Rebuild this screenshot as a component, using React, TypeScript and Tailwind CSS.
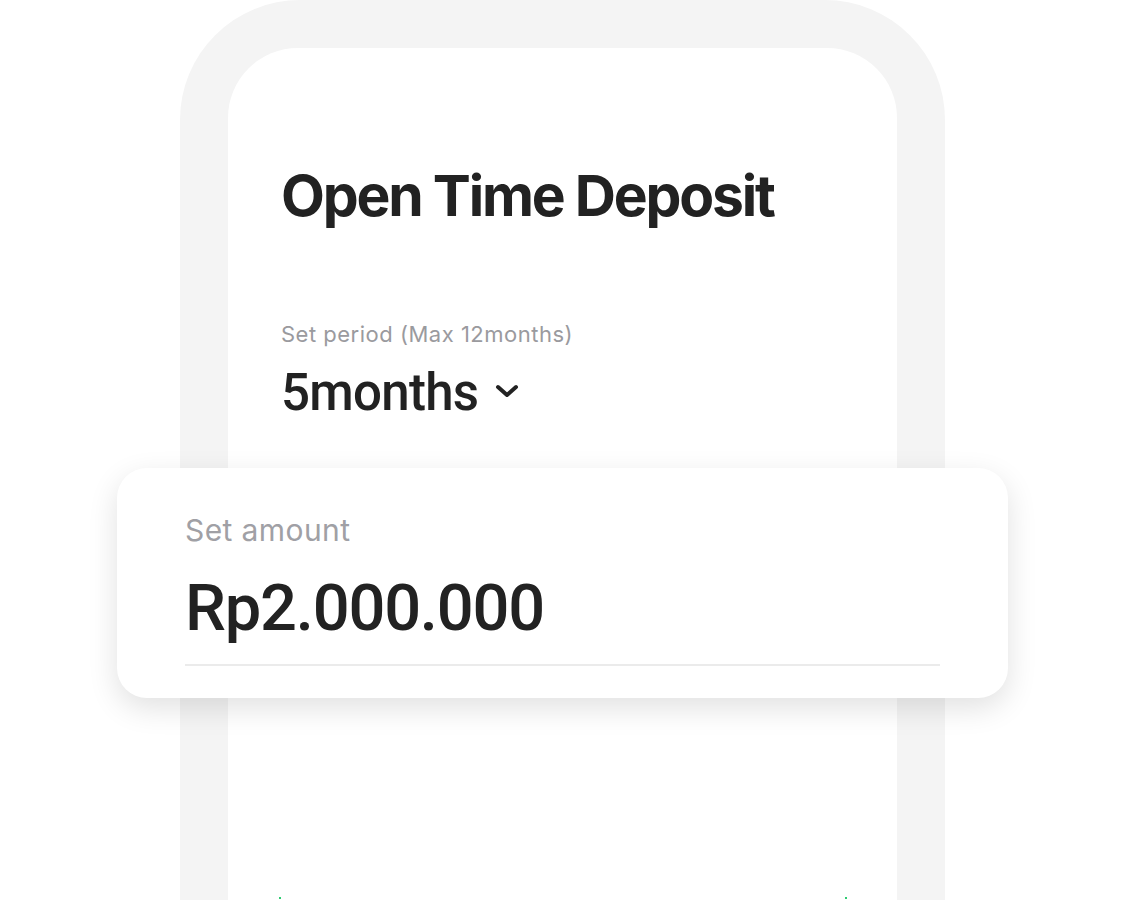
import React from 'react';

const App: React.FC = () => {
  return (
    <div className="relative w-[1125px] h-[900px] overflow-hidden bg-white" style={{ fontFamily: 'Inter, "Noto Sans", sans-serif' }}>
      {/* Phone frame */}
      <div className="ml-[180px] w-[765px] h-[948px] bg-[#f4f4f4] rounded-t-[120px] pt-[48px] px-[48px]">
        <div className="h-full bg-white rounded-t-[70px] pl-[53px] pt-[119px]">
          <h1 className="text-[57px] font-bold text-[#222] leading-none tracking-[-2.2px]">Open Time Deposit</h1>

          <p className="mt-[99px] text-[22px] text-[#9a9a9e] leading-none tracking-[0.5px]">Set period (Max 12months)</p>
          <div className="mt-[22px] flex items-center gap-[17px]">
            <span className="text-[51px] font-medium text-[#222] leading-none tracking-[-0.7px]" style={{ fontFamily: 'Roboto, sans-serif' }}>5months</span>
            <svg width="24" height="16" viewBox="0 0 24 16" className="mb-[4px]">
              <path d="M3 4 L12 12 L21 4" fill="none" stroke="#222" strokeWidth="4" strokeLinecap="round" strokeLinejoin="round" />
            </svg>
          </div>
        </div>
      </div>

      {/* Amount card */}
      <div className="absolute left-[117px] top-[468px] w-[891px] h-[230px] bg-white rounded-[30px] shadow-[0_10px_30px_rgba(0,0,0,0.12)] px-[68px] pt-[47px]">
        <p className="text-[30px] text-[#a0a0a5] leading-none tracking-[0.4px]">Set amount</p>
        <p className="mt-[31px] text-[65px] font-medium text-[#222] leading-none tracking-[-1.2px]" style={{ fontFamily: 'Roboto, sans-serif' }}>Rp2.000.000</p>
        <div className="mt-[23px] h-[2px] w-[755px] bg-[#ebebeb]" />
      </div>

      {/* tiny markers */}
      <div className="absolute left-[279px] top-[897px] w-[2px] h-[2px] bg-[#2ecc71]" />
      <div className="absolute left-[845px] top-[897px] w-[2px] h-[2px] bg-[#2ecc71]" />
    </div>
  );
};

export default App;
